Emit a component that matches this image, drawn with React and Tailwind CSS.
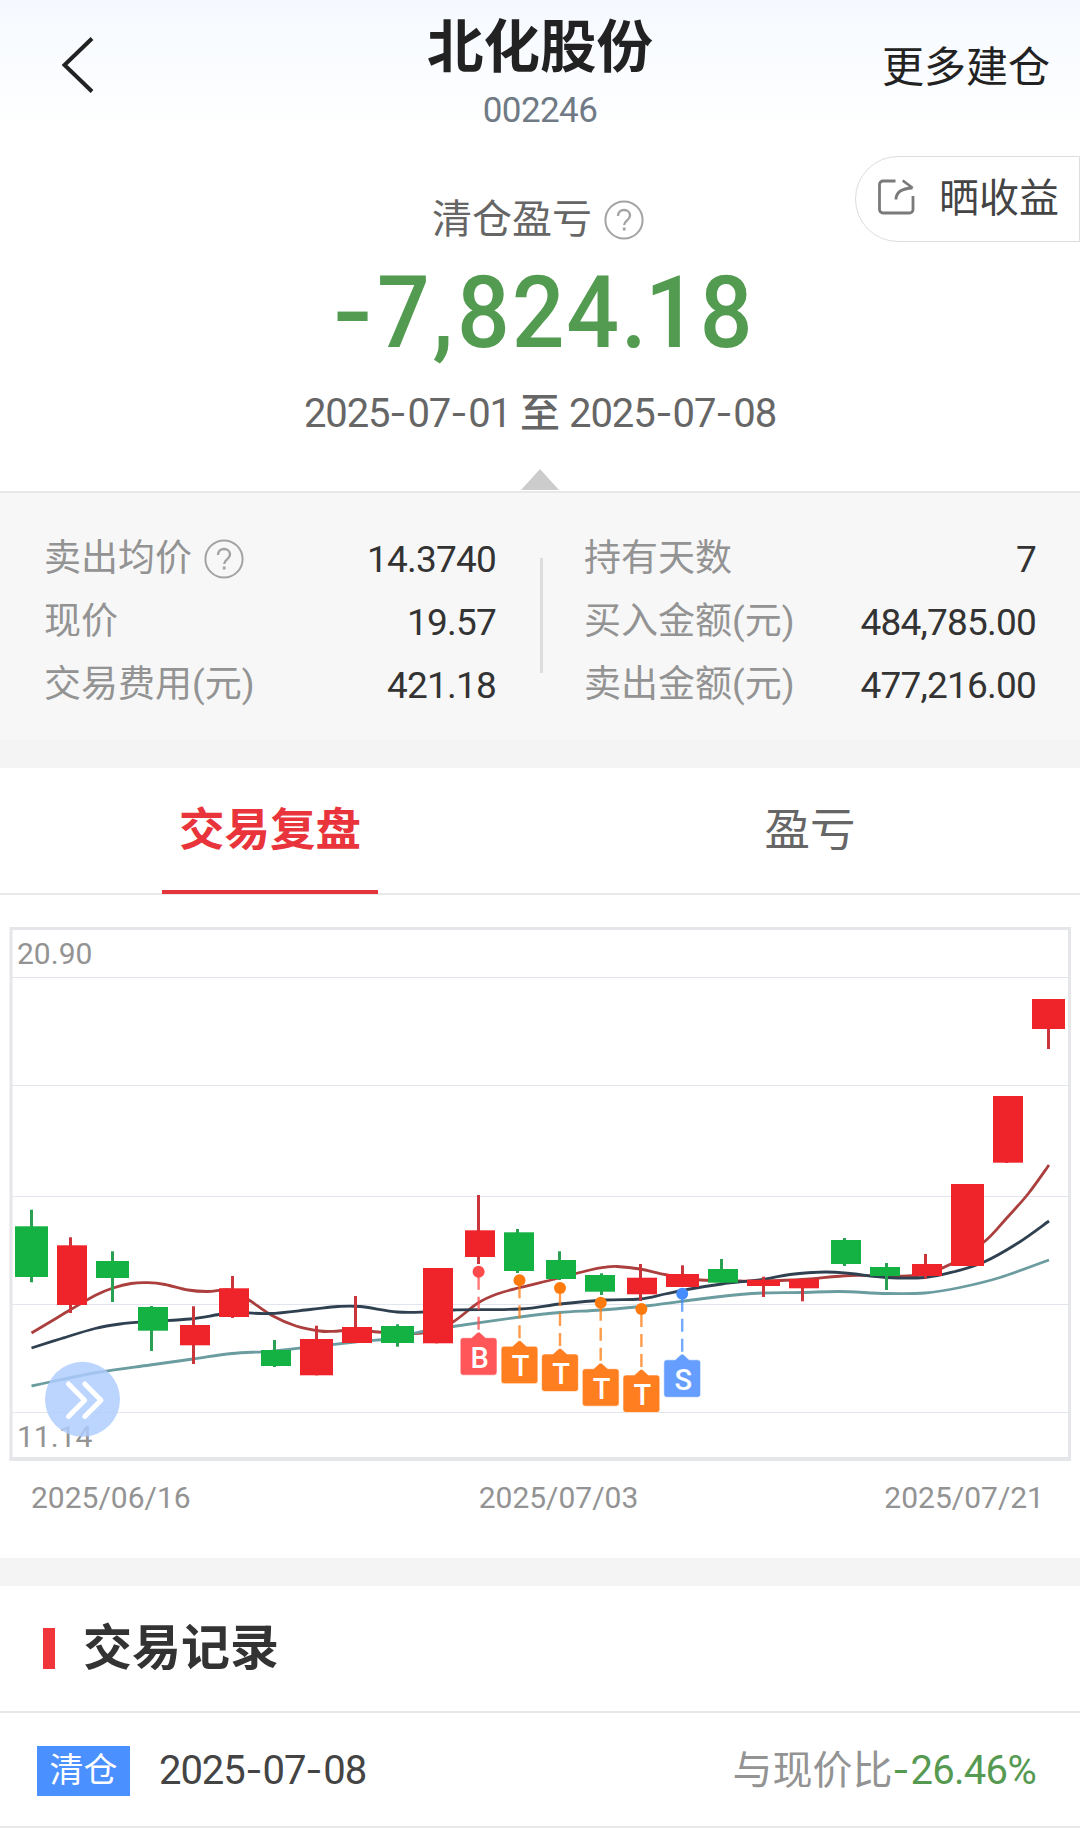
const LEFT_STATS = [
  { label: "卖出均价", value: "14.3740", help: true },
  { label: "现价", value: "19.57" },
  { label: "交易费用(元)", value: "421.18" },
];

const RIGHT_STATS = [
  { label: "持有天数", value: "7" },
  { label: "买入金额(元)", value: "484,785.00" },
  { label: "卖出金额(元)", value: "477,216.00" },
];

const UP = { body: "#ef232a", wick: "#c9353a" };
const DOWN = { body: "#14b143", wick: "#2aa052" };

// [x, width, bodyTop, bodyBottom, wickX, high, low, color]
const CANDLES = [
  [15, 33, 1226.3, 1277, 31.5, 1209.7, 1282.3, DOWN],
  [57, 30, 1245.3, 1305, 70.5, 1237.3, 1313, UP],
  [96, 33, 1261, 1278, 112.5, 1251.3, 1302, DOWN],
  [138, 30, 1307, 1330.7, 151.5, 1306, 1351, DOWN],
  [180, 30, 1325, 1345.3, 193.5, 1306.3, 1364, UP],
  [219, 30, 1288.3, 1317, 232.5, 1276, 1318, UP],
  [261, 30, 1350, 1366, 274.5, 1340, 1367, DOWN],
  [300, 33, 1339, 1375.3, 316.5, 1325.7, 1375.3, UP],
  [342, 30, 1327, 1343, 355.5, 1296, 1343, UP],
  [381, 33, 1326, 1343, 397.5, 1324.3, 1346.7, DOWN],
  [423, 30, 1268, 1343.3, 436.5, 1268, 1343.3, UP],
  [465, 30, 1230.3, 1257, 478.5, 1195, 1264, UP],
  [504, 30, 1232.3, 1271, 517.5, 1229, 1273, DOWN],
  [546, 30, 1260, 1279, 559.5, 1251.3, 1280, DOWN],
  [585, 30, 1275, 1291.7, 601.5, 1273.3, 1295, DOWN],
  [627, 30, 1277.7, 1294.3, 640.5, 1264, 1301, UP],
  [666, 33, 1274, 1287, 682.5, 1265.3, 1287, UP],
  [708, 30, 1269, 1282.7, 721.5, 1259, 1282.7, DOWN],
  [747, 33, 1279.7, 1286, 763.5, 1276.7, 1297, UP],
  [789, 30, 1279, 1288.3, 802.5, 1279, 1301.3, UP],
  [831, 30, 1240, 1264, 844.5, 1238, 1266, DOWN],
  [870, 30, 1267, 1276, 886.5, 1263, 1290, DOWN],
  [912, 30, 1264, 1276, 925.5, 1254, 1278.7, UP],
  [951, 33, 1184, 1266, 967.5, 1184, 1266, UP],
  [993, 30, 1096, 1162.7, 1006.5, 1096, 1163, UP],
  [1032, 33, 999, 1029, 1048.5, 999, 1049, UP],
];

const MA5 = [
  [31.5, 1333], [50, 1322], [70, 1310], [96, 1295], [113, 1288], [131, 1283.5], [148, 1282.7],
  [165, 1284.5], [188, 1290], [207, 1291.5], [232, 1290], [249, 1300], [272, 1315.5], [296, 1326],
  [320, 1331], [333, 1331.3], [355, 1330], [378, 1332], [400, 1334], [430, 1332], [453, 1322],
  [478, 1303], [497, 1294], [520, 1287.5], [555, 1279], [590, 1270], [605, 1267.3], [617, 1266.5],
  [640, 1269], [667, 1275], [700, 1280], [740, 1281], [763, 1281], [802, 1279.5], [850, 1275.5],
  [886, 1276], [920, 1275], [951, 1264], [984, 1242], [1005, 1220], [1028, 1194], [1049, 1165],
];

const MA10 = [
  [31.5, 1348], [60, 1339], [95, 1328.5], [120, 1324], [150, 1321.5], [190, 1319], [219, 1314.5],
  [236, 1312.5], [270, 1313.5], [310, 1309.5], [338, 1306.5], [360, 1306.5], [397, 1312], [425, 1312],
  [453, 1310], [520, 1309], [560, 1304], [605, 1300], [640, 1299], [665, 1294], [690, 1289],
  [722, 1284], [763, 1279.3], [790, 1274.5], [825, 1272], [850, 1273.5], [886, 1277.5], [925, 1277.5],
  [955, 1271.5], [984, 1262], [1018, 1243], [1049, 1221],
];

const MA20 = [
  [31.5, 1386], [50, 1382], [100, 1372], [150, 1365], [193, 1359], [232, 1353.5], [270, 1351.3],
  [310, 1347], [355, 1342], [397, 1338], [415, 1333], [453, 1326.5], [520, 1317], [560, 1312.5],
  [601, 1310], [650, 1305.5], [700, 1299], [740, 1294.5], [763, 1293], [802, 1292.5], [840, 1291.5],
  [886, 1293.5], [925, 1293], [960, 1287.5], [1000, 1277.5], [1049, 1260],
];

const TRADES = [
  { type: "B", x: 478.6, y: 1271.7, dot: "#ff4a4c", fill: "#ff5759" },
  { type: "T", x: 519.5, y: 1280.2, dot: "#ff7a0d", fill: "#ff7f20" },
  { type: "T", x: 560, y: 1288, dot: "#ff7a0d", fill: "#ff7f20" },
  { type: "T", x: 600.7, y: 1302.7, dot: "#ff7a0d", fill: "#ff7f20" },
  { type: "T", x: 641.4, y: 1309, dot: "#ff7a0d", fill: "#ff7f20" },
  { type: "S", x: 682.2, y: 1293.8, dot: "#448cff", fill: "#669eff" },
];

// Catmull-Rom spline through the points
function smoothPath(pts) {
  let d = `M${pts[0][0]} ${pts[0][1]}`;
  for (let i = 0; i < pts.length - 1; i++) {
    const p0 = pts[i - 1] || pts[i];
    const p1 = pts[i];
    const p2 = pts[i + 1];
    const p3 = pts[i + 2] || p2;
    d += `C${p1[0] + (p2[0] - p0[0]) / 6} ${p1[1] + (p2[1] - p0[1]) / 6} ${p2[0] - (p3[0] - p1[0]) / 6} ${p2[1] - (p3[1] - p1[1]) / 6} ${p2[0]} ${p2[1]}`;
  }
  return d;
}

function HelpIcon() {
  return (
    <svg width="40" height="40" viewBox="0 0 40 40" fill="none" stroke="#a3a3a3" strokeWidth="2">
      <circle cx="20" cy="20" r="18.6" />
      <path d="M14 16c0-3.6 2.6-6 6-6s6 2.3 6 5.5c0 4.8-5.8 4.8-5.8 9.6" strokeWidth="2.4" />
      <path d="M20.2 27.5v3" strokeWidth="2.8" />
    </svg>
  );
}

function ShareIcon() {
  return (
    <svg className="mb-1" width="38" height="38" viewBox="0 0 38 38" fill="none" stroke="#7a7a7a" strokeWidth="2.8">
      <path d="M18.5 3H6a3.5 3.5 0 0 0-3.5 3.5V31.5A3.5 3.5 0 0 0 6 35h26.500a3.500 3.500 0 0 0 3.500-3.500V18" />
      <path d="M19 21.5c0-7 5-11 16.5-11.5M25.7 2.5l10 7.500" />
    </svg>
  );
}

// Hyphens are drawn wider than the font's own
function DateText({ children }) {
  return (
    <span className="tracking-[-1.1px]">
      {children.split("-").map((part, i) => (
        <span key={i}>
          {i > 0 && <span className="inline-block w-[18px] scale-x-125 text-center tracking-normal">-</span>}
          {part}
        </span>
      ))}
    </span>
  );
}

function StatColumn({ items, className }) {
  return (
    <div className={className}>
      {items.map((item) => (
        <div key={item.label} className="flex h-[63px] items-center justify-between">
          <div className="flex items-center gap-3 text-[37px] text-[#939393]">
            <span>{item.label}</span>
            {item.help && <HelpIcon />}
          </div>
          <span className="pt-px text-[37px] tracking-[-0.8px] text-[#333]">{item.value}</span>
        </div>
      ))}
    </div>
  );
}

function TradeMarker({ type, x, y, dot, fill }) {
  const top = y + 66;
  return (
    <g>
      <line x1={x} x2={x} y1={y + 5} y2={y + 62} stroke={dot} strokeOpacity="0.75" strokeWidth="2.4" strokeDasharray="13 7" />
      <circle cx={x} cy={y} r="6" fill={dot} />
      <path
        d={`M${x - 15.4} ${top}h8.4l6-5.5h2l6 5.5h8.4a3 3 0 0 1 3 3v31.5a3 3 0 0 1-3 3h-30.8a3 3 0 0 1-3-3v-31.5a3 3 0 0 1 3-3z`}
        fill={fill}
        stroke="#fff"
        strokeOpacity="0.6"
        strokeWidth="1"
      />
      <text x={x + 1} y={top + 30} textAnchor="middle" fontSize="29" fontWeight="500" fill="#fff" fontFamily="Roboto">
        {type}
      </text>
    </g>
  );
}

function KLineChart() {
  return (
    <svg className="block" width="1080" height="536" viewBox="0 926 1080 536">
      {[977.5, 1085.5, 1196.5, 1304.5, 1412.5].map((y) => (
        <line key={y} x1="12" x2="1069" y1={y} y2={y} stroke="#e3e5ee" />
      ))}
      <rect x="11" y="928.5" width="1058.5" height="530.5" fill="none" stroke="#e5e6ea" strokeWidth="3" />
      <line x1="9.5" x2="1071" y1="1459" y2="1459" stroke="#e5e6ea" strokeWidth="4" />

      <g fill="none" strokeWidth="2.8">
        <path d={smoothPath(MA5)} stroke="#ab3f3d" />
        <path d={smoothPath(MA20)} stroke="#6b9c9f" />
        <path d={smoothPath(MA10)} stroke="#2f4150" />
      </g>

      {CANDLES.map(([x, w, top, bottom, wx, high, low, color]) => (
        <g key={x}>
          <rect x={wx - 1.5} y={high} width="3" height={low - high} fill={color.wick} />
          <rect x={x} y={top} width={w} height={bottom - top} fill={color.body} />
        </g>
      ))}

      {TRADES.map((t) => (
        <TradeMarker key={t.x} {...t} />
      ))}

      <g fontSize="30" fill="#939393" fontFamily="Roboto">
        <text x="17" y="963.5">20.90</text>
        <text x="17" y="1446.5">11.14</text>
      </g>

      {/* Expand button */}
      <circle cx="82.5" cy="1399.3" r="37.5" fill="#aeccff" fillOpacity="0.83" />
      <path
        d="M68.5 1384l16.2 16.2-16.2 16.2M84.8 1384l16.2 16.2-16.2 16.2"
        fill="none"
        stroke="#fff"
        strokeWidth="5"
        strokeLinecap="round"
        strokeLinejoin="round"
      />
    </svg>
  );
}

export default function App() {
  return (
    <div className="relative h-[1844px] w-[1080px] overflow-hidden bg-white font-[family-name:Roboto,'Noto_Sans_CJK_SC',sans-serif] leading-none whitespace-nowrap">
      <header className="grid h-[130px] grid-cols-[1fr_auto_1fr] bg-linear-to-b from-[#f5f9ff] to-white text-[#222]">
        <svg className="mt-[35px] ml-[60px]" width="34" height="60" viewBox="0 0 34 60" fill="none" stroke="#222" strokeWidth="4">
          <path d="M32 3.5L4.5 30L32 56.5" />
        </svg>
        <div className="flex flex-col items-center">
          <h1 className="mt-5 text-[56.5px] font-bold">北化股份</h1>
          <span className="mt-4 text-[35px] tracking-[-0.6px] text-[#6f7a85]">002246</span>
        </div>
        <span className="mt-[47px] mr-[30px] justify-self-end text-[42px]">更多建仓</span>
      </header>

      <section className="flex h-[361px] flex-col items-center">
        <div className="mt-[70px] mr-1 flex items-center gap-3 text-[40px] text-[#666]">
          <span>清仓盈亏</span>
          <HelpIcon />
        </div>
        <div className="mt-[22px] flex w-[414px] text-[101px] font-medium text-[#529b50]">
          <span className="w-[44px] shrink-0 origin-left scale-x-115">-</span>
          <span className="origin-left scale-x-92 tracking-[2px]">
            7<span className="mr-[2px] ml-px">,</span>824<span className="tracking-[-2px]">.</span>18
          </span>
        </div>
        <div className="mt-[31px] flex gap-[9px] text-[40px] text-[#666]">
          <DateText>2025-07-01</DateText>
          <span className="font-medium">至</span>
          <DateText>2025-07-08</DateText>
        </div>
        <svg className="mt-auto mb-px" width="38" height="21" viewBox="0 0 38 21">
          <path d="M19 0L38 21H0z" fill="#ccc" />
        </svg>
      </section>

      <button className="absolute top-[156px] right-0 flex h-[86px] w-[225px] items-center gap-[24px] rounded-l-full border border-[#ddd] bg-white pl-[21px] text-[40px] text-[#444]">
        <ShareIcon />
        <span>晒收益</span>
      </button>

      <section className="flex h-[249px] items-start border-t-2 border-[#e8e8e8] bg-[#f7f7f7] px-11 pt-[34px]">
        <StatColumn items={LEFT_STATS} className="w-[452px]" />
        <div className="mt-[31px] ml-11 h-[115px] w-[3px] bg-[#ddd]" />
        <StatColumn items={RIGHT_STATS} className="ml-[41px] flex-1" />
      </section>
      <div className="h-7 bg-[#f4f4f4]" />

      <nav className="grid h-[127px] grid-cols-2 border-b-2 border-[#e8e8ea] text-[45.5px]">
        <div className="flex justify-center">
          <span className="flex h-[126px] w-[216px] items-center justify-center border-b-4 border-[#e4353a] pt-1 font-bold text-[#e8343a]">
            交易复盘
          </span>
        </div>
        <span className="flex h-[125px] items-center justify-center text-[#666]">盈亏</span>
      </nav>

      <section className="h-[663px] pt-[31px]">
        <KLineChart />
        <div className="mt-[21px] flex justify-between pr-[36px] pl-[31px] text-[30px] leading-[30px] text-[#939393]">
          <span>2025/06/16</span>
          <span className="ml-[42px]">2025/07/03</span>
          <span>2025/07/21</span>
        </div>
      </section>
      <div className="h-7 bg-[#f4f4f4]" />

      <section>
        <div className="flex h-[127px] items-center gap-[28px] border-b-2 border-[#e8e8e8] pl-[43px]">
          <span className="h-[41px] w-3 bg-[#f0353b]" />
          <h2 className="text-[49px] font-bold text-[#333]">交易记录</h2>
        </div>
        <div className="flex h-[115px] items-center border-b-2 border-[#e8e8e8] pt-[3px] pr-[44px] pl-[37px]">
          <span className="flex h-[50px] w-[93px] items-center justify-center bg-[#4a90ff] pb-0.5 text-[34px] text-white">清仓</span>
          <span className="ml-[29px] text-[40px] text-[#444]">
            <DateText>2025-07-08</DateText>
          </span>
          <span className="ml-auto text-[40px] text-[#939393]">
            与现价比
            <span className="tracking-[-0.7px] text-[#569a52]">
              <span className="inline-block w-[18px] scale-x-125 text-center tracking-normal">-</span>
              26.46%
            </span>
          </span>
        </div>
      </section>
    </div>
  );
}
